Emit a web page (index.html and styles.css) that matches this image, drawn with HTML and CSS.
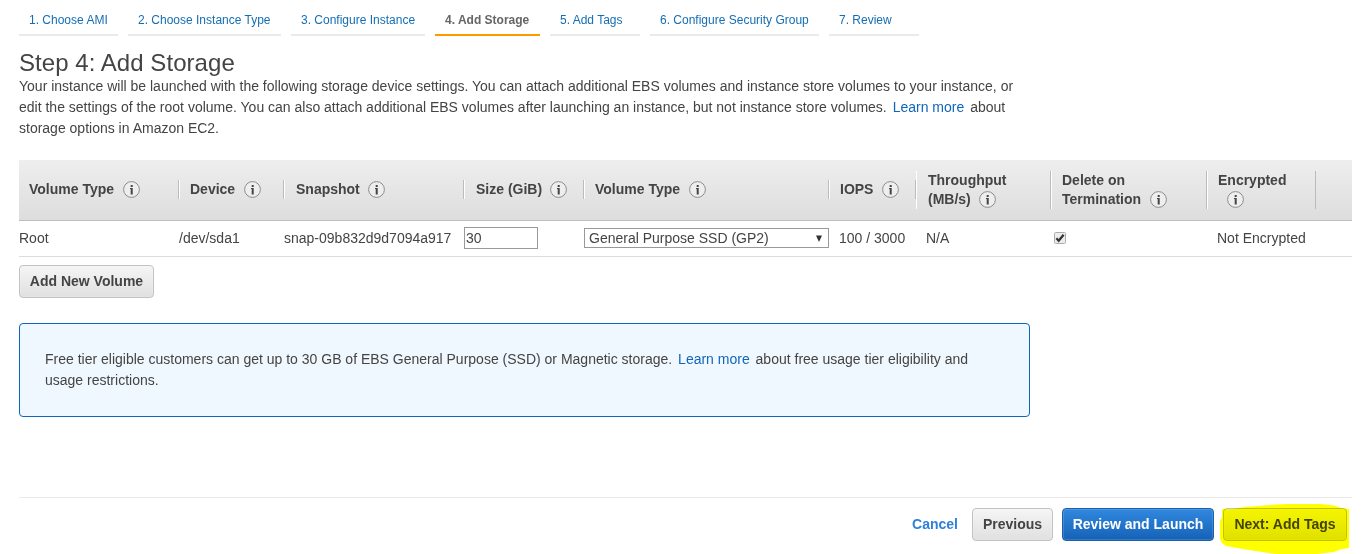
FILE: index.html
```html
<!DOCTYPE html>
<html lang="en">
<head>
<meta charset="utf-8">
<title>Step 4: Add Storage</title>
<link rel="stylesheet" href="styles.css">
</head>
<body>
<svg class="defs" width="0" height="0">
  <symbol id="info" viewBox="0 0 17 17">
    <circle cx="8.5" cy="8.5" r="7.9" fill="#eee" stroke="#8c8c8c" stroke-width="1"/>
    <path d="M7.7 4h2v2h-2zM7.7 7h2v6.6h-2zM7 7h1v1H7z" fill="#444"/>
  </symbol>
</svg>
<nav class="steps">
  <a class="step w1">1. Choose AMI</a>
  <a class="step w2">2. Choose Instance Type</a>
  <a class="step w3">3. Configure Instance</a>
  <a class="step w4 current">4. Add Storage</a>
  <a class="step w5">5. Add Tags</a>
  <a class="step w6">6. Configure Security Group</a>
  <a class="step w7">7. Review</a>
</nav>
<main>
  <h1>Step 4: Add Storage</h1>
  <p class="intro">Your instance will be launched with the following storage device settings. You can attach additional EBS volumes and instance store volumes to your instance, or<br>edit the settings of the root volume. You can also attach additional EBS volumes after launching an instance, but not instance store volumes. <a class="learn">Learn more</a> about<br>storage options in Amazon EC2.</p>

  <div class="grid head">
    <div class="th first"><span>Volume Type</span><svg class="info"><use href="#info"/></svg></div>
    <div class="th"><span>Device</span><svg class="info"><use href="#info"/></svg></div>
    <div class="th shifted"><span>Snapshot</span><svg class="info"><use href="#info"/></svg></div>
    <div class="th shifted"><span>Size (GiB)</span><svg class="info"><use href="#info"/></svg></div>
    <div class="th"><span>Volume Type</span><svg class="info"><use href="#info"/></svg></div>
    <div class="th"><span>IOPS</span><svg class="info"><use href="#info"/></svg></div>
    <div class="th two shifted"><div>Throughput<br>(MB/s)<svg class="info"><use href="#info"/></svg></div></div>
    <div class="th two"><div>Delete on<br>Termination<svg class="info"><use href="#info"/></svg></div></div>
    <div class="th two"><div>Encrypted<br><svg class="info"><use href="#info"/></svg></div></div>
    <div></div>
  </div>
  <div class="grid row">
    <div>Root</div>
    <div>/dev/sda1</div>
    <div>snap-09b832d9d7094a917</div>
    <div class="size">30</div>
    <div class="select"><span>General Purpose SSD (GP2)</span><svg width="6" height="7" viewBox="0 0 6 7"><path d="M0 .5h6L3 7z" fill="#333"/></svg></div>
    <div class="cell">100 / 3000</div>
    <div class="cell">N/A</div>
    <div class="cell-check"><svg class="check" width="12" height="12" viewBox="0 0 12 12"><rect x=".5" y=".5" width="11" height="11" rx="1" fill="#ececec" stroke="#adadad"/><path d="M2.4 6.2l2.3 2.5L9.6 2.8" fill="none" stroke="#333" stroke-width="2.3"/></svg></div>
    <div class="cell">Not Encrypted</div>
  </div>
  <a class="btn add">Add New Volume</a>

  <div class="notice">Free tier eligible customers can get up to 30 GB of EBS General Purpose (SSD) or Magnetic storage. <a class="learn">Learn more</a> about free usage tier eligibility and<br>usage restrictions.</div>
</main>
<footer>
  <a class="cancel">Cancel</a>
  <a class="btn prev">Previous</a>
  <a class="btn primary">Review and Launch</a>
  <div class="marked">
    <a class="btn next">Next: Add Tags</a>
    <svg class="marker" width="130" height="50" viewBox="1220 504 130 50"><path d="M1222 509H1232L1245 507L1258 506L1272 504.7L1288 504H1321L1334 505.5L1341 508L1349 509V548L1340 549.5L1334 552L1318 554H1276L1262 552L1243 549L1226 546L1222 543L1220 539V521L1222 517Z" fill="#ff0"/></svg>
  </div>
</footer>
</body>
</html>
```

FILE: styles.css
```css
* { box-sizing: border-box; }
body {
  margin: 0;
  width: 1366px;
  height: 554px;
  overflow: hidden;
  background: #fff;
  color: #444;
  font: 14px/21px "Liberation Sans", Arial, sans-serif;
  padding: 0 14px 0 19px;
  display: flex;
  flex-direction: column;
}
.defs { position: absolute; }
.steps { display: flex; gap: 10px; height: 36px; flex: none; }
.step {
  border-bottom: 2px solid #eaeaea;
  padding: 12px 0 0 10px;
  font-size: 12px;
  line-height: 16px;
  color: #146eb4;
  white-space: nowrap;
}
.w1 { width: 99px; }
.w2 { width: 153px; }
.w3 { width: 134px; }
.w4 { width: 105px; }
.w5 { width: 90px; }
.w6 { width: 169px; }
.w7 { width: 90px; }
.step.current { border-color: #f90; color: #666; font-weight: bold; }
h1 { margin: 13px 0 0; font-size: 24px; line-height: 27px; font-weight: normal; letter-spacing: 0.05px; }
.intro { margin: 0; white-space: nowrap; }
.learn { color: #1166bb; margin: 0 2px; }
.grid {
  display: grid;
  grid-template-columns: 160px 105px 180px 120px 245px 87px 135px 156px 109px 36px;
  align-items: center;
  white-space: nowrap;
}
.head {
  margin-top: 21px;
  height: 61px;
  background: linear-gradient(#eee, #ddd);
  border-bottom: 1px solid #bfbfbf;
  font-weight: bold;
}
.th {
  display: flex;
  align-items: center;
  height: 19px;
  line-height: 19px;
  margin-bottom: 2px;
  border-left: 1px solid #fff;
  border-right: 1px solid #bbb;
  padding-left: 10px;
}
.th.first { border-left: 0; }
.th.two { height: 38px; margin-bottom: 0; }
.th.shifted { padding-left: 11px; }
.info { width: 17px; height: 17px; margin-left: 9px; flex: none; }
.shifted .info { margin-left: 8px; }
.two .info { vertical-align: -4px; }
.row { height: 36px; border-bottom: 1px solid #ddd; }
.size {
  width: 74px;
  height: 22px;
  margin-bottom: 2px;
  border: 1px solid #999;
  padding-left: 1px;
  line-height: 20px;
}
.select {
  width: 245px;
  height: 20px;
  margin-bottom: 1px;
  border: 1px solid #999;
  display: flex;
  align-items: center;
  justify-content: space-between;
  padding: 0 6px 0 4px;
  line-height: 20px;
}
.cell { padding-left: 10px; }
.cell-check { padding: 0 0 1px 3px; }
.check { display: block; }
.btn {
  display: flex;
  align-items: center;
  justify-content: center;
  height: 33px;
  border: 1px solid #c2c2c2;
  border-radius: 4px;
  background: linear-gradient(#f5f5f5, #e0e0e0);
  box-shadow: inset 0 0 0 1px rgba(255, 255, 255, .15);
  font-weight: bold;
  white-space: nowrap;
}
.add { width: 135px; margin-top: 8px; }
.notice {
  width: 1011px;
  height: 94px;
  margin-top: 25px;
  padding: 25px;
  border: 1px solid #1166bb;
  border-radius: 4px;
  background: #f0f8ff;
  white-space: nowrap;
}
footer {
  margin-top: 80px;
  border-top: 1px solid #eaeaea;
  display: flex;
  align-items: center;
  padding: 10px 5px 0 0;
  justify-content: flex-end;
  font-weight: bold;
}
.cancel { color: #2e80d8; margin-right: 14px; }
.prev { width: 81px; margin-right: 9px; }
.primary {
  width: 152px;
  margin-right: 9px;
  background: linear-gradient(#3088de, #1562b8);
  border-color: #1a5fac;
  color: #fff;
}
.marked { position: relative; }
.next { width: 124px; }
.marker { position: absolute; left: -3px; top: -4px; mix-blend-mode: multiply; }
```
